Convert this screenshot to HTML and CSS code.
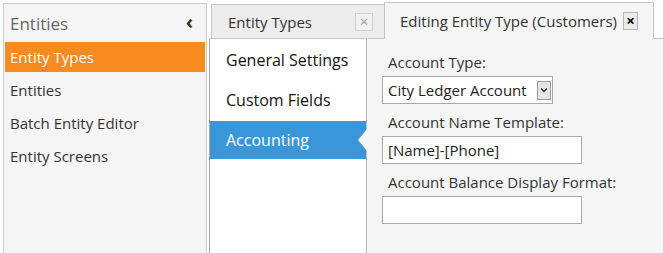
FILE: index.html
```html
<!DOCTYPE html>
<html lang="en">
<head>
    <meta charset="UTF-8">
    <title>Entity Types</title>
    <link rel="stylesheet" href="styles.css">
</head>
<body>
    <div class="app">
        <!-- Left navigation -->
        <div class="sidebar">
            <div class="sidebar-head">
                <span>Entities</span>
                <span class="collapse">&lsaquo;</span>
            </div>
            <div class="nav-item active">Entity Types</div>
            <div class="nav-item">Entities</div>
            <div class="nav-item">Batch Entity Editor</div>
            <div class="nav-item">Entity Screens</div>
        </div>

        <!-- Document tabs -->
        <div class="main">
            <div class="tab-strip">
                <div class="tab">
                    <span>Entity Types</span>
                    <span class="close">&times;</span>
                </div>
                <div class="tab selected">
                    <span>Editing Entity Type (Customers)</span>
                    <span class="close">&times;</span>
                </div>
            </div>

            <div class="tab-body">
                <div class="side-tabs">
                    <div class="side-item">General Settings</div>
                    <div class="side-item">Custom Fields</div>
                    <div class="side-item current">Accounting</div>
                </div>

                <div class="form">
                    <div class="label">Account Type:</div>
                    <div class="combo">
                        <span>City Ledger Account</span>
                        <span class="combo-btn">
                            <svg width="8" height="6" viewBox="0 0 8 6"><path d="M1 1.5 L4 4.5 L7 1.5" fill="none" stroke="#333" stroke-width="1.4"/></svg>
                        </span>
                    </div>
                    <div class="label">Account Name Template:</div>
                    <input class="field" type="text" value="[Name]-[Phone]">
                    <div class="label">Account Balance Display Format:</div>
                    <input class="field" type="text" value="">
                </div>
            </div>
        </div>
    </div>
</body>
</html>
```

FILE: styles.css
```css
body {
    margin: 0;
    background: #ffffff;
    font-family: 'Open Sans', 'Noto Sans', sans-serif;
    color: #333;
}
.app {
    display: flex;
    height: 100vh;
    overflow: hidden;
}
.sidebar {
    margin: 3px 0 0 3px;
    width: 202px;
    border: 1px solid #cbcbcb;
    border-bottom: none;
    background: #f5f5f5;
}
.sidebar-head {
    height: 38px;
    display: flex;
    align-items: center;
    justify-content: space-between;
    padding: 0 13px 0 6px;
    font-size: 17px;
    color: #666;
}
.collapse {
    font-size: 20px;
    font-weight: bold;
    color: #333;
    margin-top: -4px;
}
.nav-item {
    height: 30px;
    line-height: 30px;
    margin: 0 1px 3px 1px;
    padding-left: 5px;
    font-size: 15px;
    color: #333;
}
.nav-item.active {
    background: #f68b1f;
    color: #fff;
}
.main {
    flex: 1;
    margin-left: 2px;
    display: flex;
    flex-direction: column;
}
.tab-strip {
    height: 38px;
    display: flex;
    align-items: flex-end;
    padding-left: 2px;
    border-bottom: 1px solid #c4c4c4;
}
.tab {
    height: 34px;
    display: flex;
    align-items: center;
    justify-content: space-between;
    padding: 0 11px 0 16px;
    box-sizing: border-box;
    width: 174px;
    border: 1px solid #c4c4c4;
    border-bottom: none;
    background: #ececec;
    font-size: 15px;
    color: #333;
}
.tab .close {
    width: 16px;
    height: 16px;
    border: 1px solid #d0d0d0;
    background: #f0f0f0;
    color: #999;
    font-size: 15px;
    line-height: 15px;
    text-align: center;
}
.tab.selected {
    height: 37px;
    width: 270px;
    margin-left: -1px;
    margin-bottom: -1px;
    padding: 0 15px 0 15px;
    background: #f5f5f5;
}
.tab.selected .close {
    width: 13px;
    background: #ebebeb;
    border-color: #b5b5b5;
    color: #000;
    font-weight: bold;
}
.tab-body {
    flex: 1;
    display: flex;
}
.side-tabs {
    width: 156px;
    border-left: 1px solid #a8a8a8;
    border-right: 1px solid #b8b8b8;
    background: #fff;
    padding-top: 2px;
}
.side-item {
    position: relative;
    height: 38px;
    line-height: 38px;
    margin-bottom: 2px;
    padding-left: 16px;
    font-size: 16px;
    color: #111;
}
.side-item.current {
    background: #3a96d9;
    color: #fff;
}
.side-item.current::after {
    content: '';
    position: absolute;
    right: -1px;
    top: 8px;
    border-top: 11px solid transparent;
    border-bottom: 11px solid transparent;
    border-right: 9px solid #f5f5f5;
}
.form {
    flex: 1;
    background: #f5f5f5;
    padding: 13px 0 0 15px;
}
.label {
    height: 20px;
    line-height: 20px;
    margin: 0 0 4px 6px;
    font-size: 15px;
    color: #333;
}
.combo {
    width: 171px;
    height: 28px;
    box-sizing: border-box;
    border: 1px solid #a9a9a9;
    background: #fff;
    display: flex;
    align-items: center;
    justify-content: space-between;
    padding: 0 1px 0 5px;
    font-size: 15px;
    color: #222;
    margin-bottom: 8px;
}
.combo-btn {
    width: 14px;
    height: 19px;
    box-sizing: border-box;
    border: 1px solid #9a9a9a;
    background: #e6e6e6;
    display: flex;
    align-items: center;
    justify-content: center;
}
.field {
    display: block;
    width: 200px;
    height: 28px;
    box-sizing: border-box;
    border: 1px solid #a9a9a9;
    background: #fff;
    padding: 0 5px;
    margin: 0 0 8px 0;
    font-family: inherit;
    font-size: 15px;
    color: #222;
    outline: none;
}
```
